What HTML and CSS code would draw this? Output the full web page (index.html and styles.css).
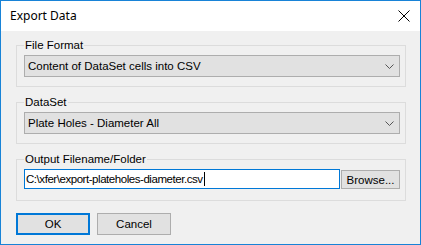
FILE: index.html
```html
<!DOCTYPE html>
<html lang="en">
<head>
    <meta charset="UTF-8">
    <title>Export Data</title>
    <link rel="stylesheet" href="styles.css">
</head>
<body>
    <div class="window">
        <div class="titlebar">
            <span class="title">Export Data</span>
            <svg class="close" width="12" height="12" viewBox="0 0 12 12">
                <path d="M0.5 0.5 L11.5 11.5 M11.5 0.5 L0.5 11.5" stroke="#000" stroke-width="1" fill="none"/>
            </svg>
        </div>
        <div class="content">
            <fieldset class="group">
                <legend>File Format</legend>
                <div class="combo">
                    <span>Content of DataSet cells into CSV</span>
                    <svg class="chevron" width="9" height="5" viewBox="0 0 9 5"><path d="M0.5 0.5 L4.5 4.5 L8.5 0.5" stroke="#555" fill="none"/></svg>
                </div>
            </fieldset>
            <fieldset class="group">
                <legend>DataSet</legend>
                <div class="combo">
                    <span>Plate Holes - Diameter All</span>
                    <svg class="chevron" width="9" height="5" viewBox="0 0 9 5"><path d="M0.5 0.5 L4.5 4.5 L8.5 0.5" stroke="#555" fill="none"/></svg>
                </div>
            </fieldset>
            <fieldset class="group group-output">
                <legend>Output Filename/Folder</legend>
                <div class="file-row">
                    <div class="textbox">C:\xfer\export-plateholes-diameter.csv<span class="caret"></span></div>
                    <button class="btn browse">Browse...</button>
                </div>
            </fieldset>
            <div class="actions">
                <button class="btn btn-default">OK</button>
                <button class="btn">Cancel</button>
            </div>
        </div>
    </div>
</body>
</html>
```

FILE: styles.css
```css
body{
    margin: 0;
    font-family: "Liberation Sans", Arial, sans-serif;
    font-size: 11.5px;
    color: #000;
}
.window{
    width: 421px;
    height: 245px;
    box-sizing: border-box;
    border: 1px solid #1883d7;
    background: #f0f0f0;
}
/* 标题栏 */
.titlebar{
    height: 30px;
    background: #fff;
    display: flex;
    align-items: center;
    padding: 0 10px 0 9px;
}
.title{
    flex: 1;
    font-family: "Noto Sans", sans-serif;
    font-size: 12px;
    margin-top: -1px;
}
.close{
    display: block;
}
.content{
    padding: 7px 14px 0 15px;
}
/* 分组框 */
.group{
    margin: 0 0 8px;
    padding: 3px 5px 9px 7px;
    border: 1px solid #dcdcdc;
    min-width: 0;
}
.group legend{
    padding: 0 1px;
    line-height: 14px;
    color: #000;
}
.group-output{
    padding-bottom: 11px;
}
.combo{
    height: 22px;
    box-sizing: border-box;
    border: 1px solid #adadad;
    background: #e1e1e1;
    display: flex;
    align-items: center;
    padding: 0 5px 0 3px;
}
.combo span{
    flex: 1;
}
.chevron{
    display: block;
    margin-top: 1px;
}
.file-row{
    display: flex;
    align-items: flex-start;
}
.textbox{
    width: 316px;
    height: 20px;
    box-sizing: border-box;
    border: 1px solid #0078d7;
    background: #fff;
    padding: 0 1px;
    line-height: 18px;
    display: flex;
    align-items: center;
    letter-spacing: -0.45px;
}
.caret{
    display: inline-block;
    width: 1px;
    height: 14px;
    background: #000;
    margin-left: 1px;
}
.btn{
    font: inherit;
    color: #000;
    background: #e1e1e1;
    border: 1px solid #adadad;
    height: 22px;
    width: 74px;
    padding: 0;
    margin: 0;
}
.browse{
    width: 59px;
    height: 19px;
    margin-top: 1px;
    margin-left: 1px;
}
.actions{
    margin-top: 12px;
    display: flex;
    gap: 7px;
}
/* 默认按钮：蓝色粗边框 */
.btn-default{
    border: 2px solid #0078d7;
}
```
